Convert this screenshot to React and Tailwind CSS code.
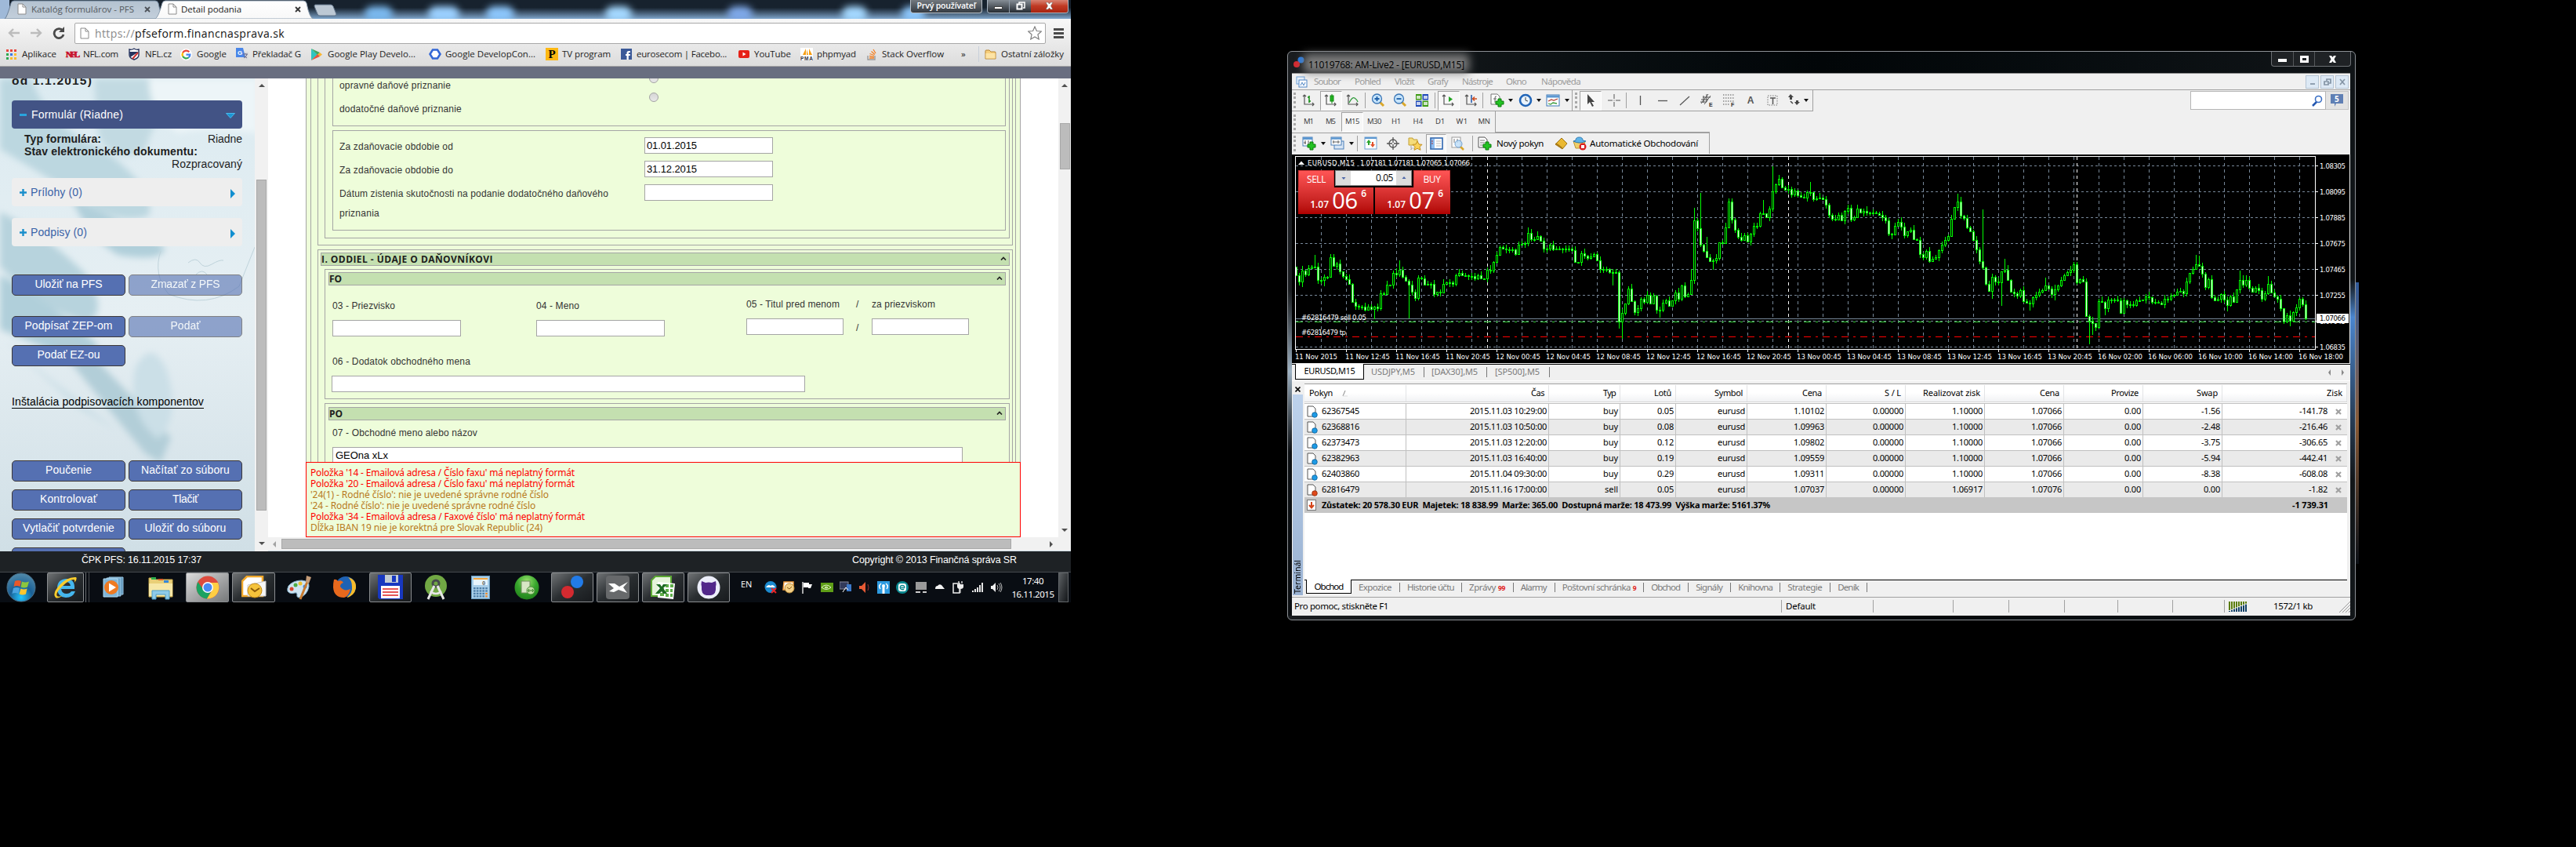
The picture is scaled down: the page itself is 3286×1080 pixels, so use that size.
import React, { useLayoutEffect, useRef } from "react";

/* Text run whose letter spacing is computed so it occupies the given width. */
function Fit({ w, className = "", children }) {
  const ref = useRef(null);
  useLayoutEffect(() => {
    const el = ref.current;
    el.style.letterSpacing = "0px";
    const n = el.textContent.length;
    const nat = el.getBoundingClientRect().width;
    el.style.letterSpacing = (w - nat) / n + "px";
  }, [w, children]);
  return (
    <span className={"shrink-0 whitespace-pre " + className}>
      <span ref={ref}>{children}</span>
    </span>
  );
}

const S = ({ w = 16, h = 16, vb, className = "", children }) => (
  <svg width={w} height={h} viewBox={vb || `0 0 ${w} ${h}`} className={"shrink-0 " + className}>
    {children}
  </svg>
);

/* ---------------- browser ---------------- */

const PageIcon = () => (
  <S w={12} h={15}>
    <path d="M1 1h6l4 4v9H1z" fill="#fff" stroke="#8b8b8b" />
    <path d="M7 1v4h4" fill="none" stroke="#8b8b8b" />
  </S>
);

const bookmarks = [
  { t: "Aplikace", w: 44, ml: "ml-[8px]", g: "gap-[7px]", i: (
    <S w={13} h={13}>{[0, 1, 2].map((r) => [0, 1, 2].map((c) => (
      <rect key={r + "" + c} x={c * 5} y={r * 5} width="3" height="3" fill={["#e8453c", "#e8453c", "#e8453c", "#2da94f", "#3c79e6", "#f9bb2d", "#2da94f", "#f9bb2d", "#f9bb2d"][r * 3 + c]} />
    )))}</S>) },
  { t: "NFL.com", w: 45, ml: "ml-[12px]", g: "gap-[6px]", i: <span className="w-4 whitespace-nowrap font-['Liberation_Serif'] text-[11px] font-bold leading-none tracking-[-2px] text-[#c8102e] [-webkit-text-stroke:0.7px_#c8102e]">NFL</span> },
  { t: "NFL.cz", w: 34, ml: "ml-[13px]", g: "gap-[7px]", i: <S w={14} h={16}><path d="M1 2q3 1 6-1q3 2 6 1v7q0 4-6 6q-6-2-6-6z" fill="#fff" stroke="#26335e" strokeWidth="1.4" /><path d="M1 5h12L2 12z" fill="#26335e" /><path d="M12 6L5 14" stroke="#c33" strokeWidth="2" /></S> },
  { t: "Google", w: 38, ml: "ml-[11px]", g: "gap-[6px]", i: <S w={15} h={15} vb="0 0 16 16"><circle cx="8" cy="8" r="8" fill="#fff" /><g fill="none" strokeWidth="2.4"><path d="M12 4.6A5.2 5.2 0 0 0 3.4 5.6" stroke="#ea4335" /><path d="M3.4 5.6a5.2 5.2 0 0 0 0 4.8" stroke="#fbbc05" /><path d="M3.4 10.4a5.2 5.2 0 0 0 8 1.6" stroke="#34a853" /><path d="M11.4 12A5 5 0 0 0 13.2 8H8" stroke="#4285f4" /></g></S> },
  { t: "Překladač G", w: 62, ml: "ml-[12px]", g: "gap-[5px]", i: <S w={16} h={16}><rect x="6" y="5" width="10" height="11" fill="#dcdcdc" /><path d="M0 0h9l3 12H0z" fill="#4a86e8" /><text x="2" y="9" fontSize="8" fontWeight="bold" fill="#fff" fontFamily="Liberation Sans">G</text><path d="M9 8h6M12 7v1M10 13q4-2 4-5M10 10l4 3" stroke="#668" fill="none" /></S> },
  { t: "Google Play Develo...", w: 112, ml: "ml-[13px]", g: "gap-[7px]", i: <S w={14} h={15}><path d="M0 0l8 7.5L0 15z" fill="#31c4c0" /><path d="M0 0l11 5-3 3z" fill="#41a85f" /><path d="M11 5l3 2.500-3 2.500-3-2.500z" fill="#fbb62d" /><path d="M0 15l11-5-3-3z" fill="#e8533b" /></S> },
  { t: "Google DevelopCon...", w: 115, ml: "ml-[17px]", g: "gap-[5px]", i: <S w={16} h={14}><path d="M5 1.500h6l3.500 5.500-3.500 5.500H5L1.500 7z" fill="#fff" stroke="#3367d6" strokeWidth="2.6" /></S> },
  { t: "TV program", w: 62, ml: "ml-[13px]", g: "gap-[5px]", i: <span className="flex h-[16px] w-[16px] items-center justify-center bg-[#fdb813] font-['Liberation_Serif'] text-[15px] font-bold leading-none text-black">P</span> },
  { t: "eurosecom | Facebo...", w: 115, ml: "ml-[13px]", g: "gap-[6px]", i: <S w={14} h={14}><rect width="14" height="14" fill="#3b5998" /><path d="M7.500 14V9H6V7h1.500V5.500Q7.500 3 10 3h2v2h-1.300q-.9 0-.9 1V7H12l-.3 2H9.800v5z" fill="#fff" /></S> },
  { t: "YouTube", w: 47, ml: "ml-[15px]", g: "gap-[6px]", i: <S w={14} h={10}><rect width="14" height="10" rx="2" fill="#e62117" /><path d="M5.500 2.500l4 2.500-4 2.500z" fill="#fff" /></S> },
  { t: "phpmyad", w: 50, ml: "ml-[12px]", g: "gap-[5px]", i: <S w={16} h={16}><rect width="16" height="16" fill="#fff" /><path d="M3 9l4-8v8zM8 9V2l2 7zM11 9l0-8 4 8z" fill="#f89c0e" /><text x="0" y="16" fontSize="6.500" fontWeight="bold" fill="#334" fontFamily="Liberation Sans" textLength="16">PMA</text></S> },
  { t: "Stack Overflow", w: 79, ml: "ml-[14px]", g: "gap-[7px]", i: <S w={12} h={15}><path d="M1 9v5h9V9" fill="none" stroke="#9a9b9c" strokeWidth="1.400" /><path d="M3 12h6M3 9.500l6 .8M3.500 6.500l5.500 2M5.500 3.500l4.500 4M8 1l3 5" stroke="#f48024" strokeWidth="1.300" /></S> },
];

const Glow = ({ c }) => <div className={"absolute top-[8px] h-[20px] rounded-full blur-[5px] " + c} />;

function TabStrip() {
  return (
    <div className="relative flex h-[24px] overflow-hidden bg-gradient-to-b from-[#17222e] from-40% to-[#7fa6cc] font-['Open_Sans',sans-serif] text-[11.5px]">
      <Glow c="left-[465px] w-[36px] bg-[#7ab8ee]" />
      <Glow c="left-[546px] w-[40px] bg-[#9bd0ff]" />
      <Glow c="left-[620px] w-[36px] bg-[#8cc6fb]" />
      <Glow c="left-[772px] w-[34px] bg-[#a4d8ff]" />
      <Glow c="left-[928px] w-[32px] bg-[#7ea8e8]" />
      <Glow c="left-[1074px] w-[32px] bg-[#a4d8ff]" />
      <Glow c="left-[1150px] w-[30px] bg-[#8cc6fb]" />
      <svg width="440" height="24" className="absolute left-0 top-0">
        <defs>
          <linearGradient id="tabA" x1="0" y1="0" x2="0" y2="1"><stop offset="0" stopColor="#b4c2d0" /><stop offset="1" stopColor="#c3cfdb" /></linearGradient>
          <linearGradient id="tabB" x1="0" y1="0" x2="0" y2="1"><stop offset="0" stopColor="#fff" /><stop offset="1" stopColor="#f8f8f8" /></linearGradient>
        </defs>
        <rect width="12" height="24" fill="#9fb9d8" />
        <path d="M6 24Q9 22 14 4q1-3 4-3H198q3 0 4 3q3 16 8 20z" fill="url(#tabA)" stroke="#6d8299" />
        <path d="M198 24Q202 22 207 4q1-3 4-3H387q3 0 4 3q4 20 9 20z" fill="url(#tabB)" stroke="#8fa0b2" />
        <path d="M402 6h20q2 0 3 2l4 10q0 2-2 2h-19q-2 0-3-2l-4-10q0-2 1-2z" fill="#bcc8d4" stroke="#5f7288" />
      </svg>
      <div className="relative flex h-[24px] w-full items-center pb-px">
        <div className="ml-[22px]"><PageIcon /></div>
        <Fit w={131} className="ml-[6px] text-[#555a60]">Katalóg formulárov - PFS</Fit>
        <S w={8} h={8} className="ml-[13px]"><path d="M1 1l6 6M7 1l-6 6" stroke="#4d5258" strokeWidth="1.800" /></S>
        <div className="ml-[22px]"><PageIcon /></div>
        <Fit w={77} className="ml-[5px] text-[#222]">Detail podania</Fit>
        <S w={8} h={8} className="ml-[68px]"><path d="M1 1l6 6M7 1l-6 6" stroke="#333" strokeWidth="1.800" /></S>
        <div className="flex-1" />
        <div className="-mt-[7px] flex h-[18px] w-[92px] shrink-0 items-center justify-center rounded-b border border-t-0 border-[#b6bec6] bg-gradient-to-b from-[#777d83] to-[#363c43] text-[10.5px] font-semibold text-white"><Fit w={75}>Prvý používateľ</Fit></div>
        <div className="-mt-[7px] ml-[6px] mr-[3px] flex h-[18px] w-[104px] shrink-0 overflow-hidden rounded-b border border-t-0 border-[#a9b5c2]">
          <div className="flex w-[28px] items-center justify-center border-r border-[#8d99a6] bg-gradient-to-b from-[#8c949c] to-[#272d34]"><div className="mt-1 h-[4px] w-[11px] border border-[#444] bg-white" /></div>
          <div className="flex w-[27px] items-center justify-center bg-gradient-to-b from-[#8c949c] to-[#272d34]"><S w={12} h={11}><path d="M4 3V1h7v7H9" fill="none" stroke="#fff" strokeWidth="1.500" /><rect x="1.500" y="3.500" width="6" height="6" fill="none" stroke="#fff" strokeWidth="2" /></S></div>
          <div className="flex w-[47px] items-center justify-center bg-gradient-to-b from-[#d98a7b] via-[#c03a24] to-[#a92410]"><S w={11} h={9}><path d="M1 0h3l1.500 2L7 0h3L7.500 4.500 10 9H7L5.500 7 4 9H1l2.500-4.500z" fill="#fff" stroke="#555" strokeWidth=".5" /></S></div>
        </div>
      </div>
    </div>
  );
}

function BrowserBars() {
  return (
    <div className="h-[61px] bg-gradient-to-b from-[#f8f8f8] to-[#dcdcdc] font-['Open_Sans',sans-serif]">
      <div className="flex h-[33px] items-center pt-[3px]">
        <S w={16} h={14} className="ml-[9px]"><path d="M8 2L3 7l5 5M3 7h13" fill="none" stroke="#bcbcbc" strokeWidth="2.400" /></S>
        <S w={16} h={14} className="ml-[14px]"><path d="M8 2l5 5-5 5M0 7h13" fill="none" stroke="#bcbcbc" strokeWidth="2.400" /></S>
        <S w={16} h={16} className="ml-[12px]"><path d="M13 5A6 6 0 1 0 14 10" fill="none" stroke="#4a4a4a" strokeWidth="2.800" /><path d="M15 0v7H8z" fill="#4a4a4a" /></S>
        <div className="ml-[12px] flex h-[27px] w-[1239px] shrink-0 items-center rounded-[2px] border border-[#a9a9a9] bg-white text-[14px]">
          <div className="ml-[6px]"><PageIcon /></div>
          <Fit w={242} className="ml-[7px] text-[#111]"><span className="text-[#8a8a8a]">https://</span>pfseform.financnasprava.sk</Fit>
          <div className="flex-1" />
          <S w={18} h={18} className="mr-[4px]"><path d="M9 1l2.400 5.500 6 .5-4.500 4 1.300 6L9 14l-5.200 3 1.300-6-4.500-4 6-.5z" fill="#fff" stroke="#808080" strokeWidth="1.200" /></S>
        </div>
        <S w={13} h={13} className="ml-[10px]"><path d="M0 1.500h13M0 6.500h13M0 11.500h13" stroke="#4a4a4a" strokeWidth="3" /></S>
      </div>
      <div className="flex h-[27px] items-center pb-[3px] text-[11.5px] text-[#222]">
        {bookmarks.map((b) => (
          <div key={b.t} className={"flex shrink-0 items-center " + b.g + " " + b.ml}>
            {b.i}
            <Fit w={b.w}>{b.t}</Fit>
          </div>
        ))}
        <span className="ml-[22px] w-[8px]">»</span>
        <div className="flex-1" />
        <div className="h-[20px] w-px bg-[#c8d0da]" />
        <S w={15} h={13} className="ml-[7px]"><path d="M1 2q0-1 1-1h4l2 2h5q1 0 1 1v8H1z" fill="#f7cf7c" stroke="#b98532" /><path d="M1.500 5h12v6.500h-12z" fill="#fde3a5" /></S>
        <Fit w={80} className="ml-[6px] mr-[9px]">Ostatní záložky</Fit>
      </div>
      <div className="h-px bg-[#a5a5a5]" />
    </div>
  );
}

const Btn = ({ w, off, children }) => (
  <div className={"flex h-[27px] w-[145px] items-center justify-center rounded-[5px] border border-[#3d3838] bg-[#5570b2] pb-[3px] text-[14px] text-white " + (off ? "opacity-60" : "")}>
    {children && <Fit w={w}>{children}</Fit>}
  </div>
);

const Row = ({ mt, children }) => <div className={"ml-[15px] flex gap-[4px] " + mt}>{children}</div>;

function Sidebar() {
  return (
    <div className="relative h-[603px] w-[325px] shrink-0 overflow-hidden bg-gradient-to-b from-[#dcebf1] via-[#e6eff3] to-[#d0dfe6] font-['Liberation_Sans',sans-serif] text-[14px] text-[#1e1e1e]">
      <svg width="325" height="603" className="absolute left-0 top-0">
        <defs><filter id="soft"><feGaussianBlur stdDeviation="4" /></filter></defs>
        <g filter="url(#soft)">
          <path d="M0 0h40Q60 60 130 90Q200 140 190 175Q150 190 100 150L0 90z" fill="#bcd7e0" />
          <path d="M120 0h160q-10 10-50 12q-30 30-45 80q-40 20-60-20z" fill="#c2dae2" />
          <path d="M190 0h140v70q-80-10-100 0q-40-20-40-70z" fill="#edf5f8" />
          <path d="M0 170Q60 200 110 250q30 50 0 60Q60 300 0 240z" fill="#b7d3dd" />
          <path d="M90 150Q150 180 210 215q0 20-60 10Q110 200 90 150z" fill="#b0cfda" />
          <path d="M0 250Q70 290 125 340q-10 20-50 10L0 320z" fill="#b0cfda" />
          <path d="M50 310L105 340L218 458L205 490L185 478L80 350z" fill="#b2ced8" />
          <path d="M172 370q20-40 40 0q20 60-10 90q-40-30-30-90z" fill="#cbdfe7" />
          <path d="M0 330L100 420 150 450 60 380z" fill="#c8dde5" />
        </g>
        <path d="M205 220q-10 30 10 55q50 20 90-10l20-50M240 235q10-8 15 0t15 2 15-5M250 250q8-8 14 0" fill="none" stroke="#bfd3db" />
      </svg>
      <div className="relative flex h-full flex-col [&>*]:shrink-0">
        <div className="-mt-[7px] ml-[15px] h-[20px] text-[15.500px] font-bold leading-[20px]"><Fit w={103}>od 1.1.2015)</Fit></div>
        <div className="ml-[15px] mt-[15px] flex h-[36px] w-[294px] items-center rounded-[4px] bg-[#425385] text-white">
          <div className="ml-[10px] h-[3px] w-[9px] bg-[#29a3dd]" />
          <Fit w={117} className="ml-[6px]">Formulár (Riadne)</Fit>
          <S w={12} h={7} className="ml-[131px] mt-[3px]"><path d="M.5.500h11L6 6.500z" fill="#1b95d3" stroke="#4bb8ea" /></S>
        </div>
        <div className="ml-[31px] mt-[5px] flex h-[16px] w-[278px] items-center justify-between"><Fit w={98} className="font-bold">Typ formulára:</Fit><Fit w={44}>Riadne</Fit></div>
        <div className="ml-[31px] flex h-[16px] items-center"><Fit w={221} className="font-bold">Stav elektronického dokumentu:</Fit></div>
        <div className="ml-[31px] flex h-[16px] w-[278px] items-center justify-end"><Fit w={90}>Rozpracovaný</Fit></div>
        {[["Prílohy (0)", 66, "mt-[10px]"], ["Podpisy (0)", 72, "mt-[15px]"]].map(([t, w, m]) => (
          <div key={t} className={"ml-[15px] flex h-[36px] w-[294px] items-center rounded-[4px] bg-[#eeeeee] text-[#3a63a8] " + m}>
            <S w={9} h={9} className="ml-[10px]"><path d="M4.500 0v9M0 4.500h9" stroke="#1b8fcb" strokeWidth="2.400" /></S>
            <Fit w={w} className="ml-[5px]">{t}</Fit>
            <div className="flex-1" />
            <S w={6} h={12} className="mr-[9px] mt-[3px]"><path d="M0 0l6 6-6 6z" fill="#128fd0" /></S>
          </div>
        ))}
        <Row mt="mt-[36px]"><Btn w={86}>Uložiť na PFS</Btn><Btn w={88} off>Zmazať z PFS</Btn></Row>
        <Row mt="mt-[26px]"><Btn w={112}>Podpísať ZEP-om</Btn><Btn w={38} off>Podať</Btn></Row>
        <Row mt="mt-[10px]"><Btn w={80}>Podať EZ-ou</Btn></Row>
        <div className="ml-[15px] mt-[36px] h-[18px] leading-[18px] text-black"><Fit w={245} className="border-b border-black leading-[13px]">Inštalácia podpisovacích komponentov</Fit></div>
        <Row mt="mt-[66px]"><Btn w={59}>Poučenie</Btn><Btn w={113}>Načítať zo súboru</Btn></Row>
        <Row mt="mt-[10px]"><Btn w={73}>Kontrolovať</Btn><Btn w={33}>Tlačiť</Btn></Row>
        <Row mt="mt-[10px]"><Btn w={117}>Vytlačiť potvrdenie</Btn><Btn w={104}>Uložiť do súboru</Btn></Row>
        <Row mt="mt-[10px]"><Btn /></Row>
      </div>
    </div>
  );
}

const Input = ({ c, children }) => <div className={"flex h-[21px] shrink-0 items-center border border-[#a5a5a5] bg-white pl-[2px] text-[13px] text-black " + c}>{children}</div>;
const Radio = ({ c = "" }) => <div className={"h-[12px] w-[12px] rounded-full border border-[#a3a3a3] bg-gradient-to-b from-[#d6d6d6] to-[#e8e8e8] " + c} />;
const Caret = () => <S w={8} h={5} className="mb-[3px] mr-[3px]"><path d="M1 4.500l3-3 3 3" fill="none" stroke="#222" strokeWidth="1.700" /></S>;
const Bar = ({ w, children }) => (
  <div className="flex h-[17px] items-center justify-between border border-[#a5a5a5] bg-[#c4e0b0] font-['Open_Sans',sans-serif] text-[12px] font-bold text-[#1c1c1c]">
    <Fit w={w}>{children}</Fit><Caret />
  </div>
);

function FormPage() {
  return (
    <div className="relative h-[585px] overflow-hidden bg-white font-['Liberation_Sans',sans-serif] text-[12px] text-[#333]">
      <div className="ml-[48px] h-[640px] w-[912px] border-x border-[#a5a5a5] bg-[#eefdda] px-[5px]">
        <div className="h-full border-x border-[#a5a5a5] pl-[8px] pr-[3px]">
          <div className="h-[213px] border border-t-0 border-[#a5a5a5] pl-[8px] pr-[3px]">
            <div className="h-[204px] border border-t-0 border-[#a5a5a5] pl-[9px] pr-[4px]">
              <div className="h-[61px] border border-t-0 border-[#a5a5a5] pl-[8px]">
                <div className="flex h-[30px] pt-[1px]"><Fit w={142} className="leading-[16px]">opravné daňové priznanie</Fit><Radio c="-mt-[7px] ml-[253px]" /></div>
                <div className="flex h-[30px] pt-[1px]"><Fit w={156} className="leading-[16px]">dodatočné daňové priznanie</Fit><Radio c="-mt-[13px] ml-[239px]" /></div>
              </div>
              <div className="mt-[5px] h-[128px] border border-[#a5a5a5] pl-[8px] pt-[8px]">
                <div className="flex h-[30px] items-start"><Fit w={145} className="mt-[4px] leading-[16px]">Za zdaňovacie obdobie od</Fit><Input c="ml-[244px] w-[164px]"><Fit w={64}>01.01.2015</Fit></Input></div>
                <div className="flex h-[30px] items-start"><Fit w={145} className="mt-[4px] leading-[16px]">Za zdaňovacie obdobie do</Fit><Input c="ml-[244px] w-[164px]"><Fit w={64}>31.12.2015</Fit></Input></div>
                <div className="flex h-[25px] items-start"><Fit w={343} className="mt-[4px] leading-[16px]">Dátum zistenia skutočnosti na podanie dodatočného daňového</Fit><Input c="ml-[46px] w-[164px]" /></div>
                <Fit w={51} className="mt-[4px] block leading-[16px]">priznania</Fit>
              </div>
            </div>
          </div>
          <div className="mt-[5px] h-[420px] border border-[#a5a5a5] pl-[3px] pr-[3px] pt-[3px]">
            <Bar w={219}>I. ODDIEL - ÚDAJE O DAŇOVNÍKOVI</Bar>
            <div className="ml-[5px] mt-[4px] h-[166px] border border-[#a5a5a5] pl-[4px] pr-[4px] pt-[3px]">
              <Bar w={16}>FO</Bar>
              <div className="ml-[5px] mt-[15px] flex h-[18px] items-center">
                <Fit w={80} className="mt-[4px] w-[260px]">03 - Priezvisko</Fit>
                <Fit w={55} className="mt-[4px] w-[268px]">04 - Meno</Fit>
                <Fit w={119} className="w-[140px]">05 - Titul pred menom</Fit>
                <span className="w-[20px]">/</span>
                <Fit w={81}>za priezviskom</Fit>
              </div>
              <div className="ml-[5px] mt-[9px] flex h-[23px] items-start">
                <Input c="mt-[2px] w-[164px]" />
                <Input c="ml-[96px] mt-[2px] w-[164px]" />
                <Input c="ml-[104px] w-[124px]" />
                <span className="ml-[16px] mt-[3px] w-[20px]">/</span>
                <Input c="w-[124px]" />
              </div>
              <Fit w={176} className="ml-[5px] mt-[24px] block leading-[16px]">06 - Dodatok obchodného mena</Fit>
              <Input c="ml-[4px] mt-[10px] w-[604px]" />
            </div>
            <div className="ml-[5px] mt-[5px] h-[200px] border border-[#a5a5a5] pl-[4px] pr-[4px] pt-[4px]">
              <Bar w={17}>PO</Bar>
              <Fit w={185} className="ml-[5px] mt-[8px] block leading-[16px]">07 - Obchodné meno alebo názov</Fit>
              <Input c="ml-[5px] mt-[10px] w-[804px]"><Fit w={67} className="ml-px">GEOna xLx</Fit></Input>
            </div>
          </div>
        </div>
      </div>
      <div className="absolute left-[48px] top-[489px] h-[96px] w-[912px] border border-[#f00] bg-[#eefdda] pl-[5px] pt-[6px] font-['Noto_Sans',sans-serif] text-[12px] leading-[14px] text-[#f00]">
        <Fit w={337} className="block">Položka '14 - Emailová adresa / Číslo faxu' má neplatný formát</Fit>
        <Fit w={337} className="block">Položka '20 - Emailová adresa / Číslo faxu' má neplatný formát</Fit>
        <Fit w={304} className="block text-[#b87a1c]">'24(1) - Rodné číslo': nie je uvedené správne rodné číslo</Fit>
        <Fit w={287} className="block text-[#b87a1c]">'24 - Rodné číslo': nie je uvedené správne rodné číslo</Fit>
        <Fit w={350} className="block">Položka '34 - Emailová adresa / Faxové číslo' má neplatný formát</Fit>
        <Fit w={296} className="block text-[#b87a1c]">Dĺžka IBAN 19 nie je korektná pre Slovak Republic (24)</Fit>
      </div>
    </div>
  );
}

const Tri = ({ d, c = "#505050" }) => <S w={8} h={8} className="mx-auto"><path d={d} fill={c} /></S>;

/* ---------------- taskbar ---------------- */

const TB = ({ w, lit, children }) => (
  <div className={"flex h-[38px] shrink-0 items-center justify-center rounded-[2px] border border-[#8a8d90] " + w + " " + (lit ? "bg-gradient-to-br from-[#dcdcdc] to-[#77797b]" : "bg-gradient-to-br from-[#707375] via-[#2a2e31] to-[#181b1e]")}>{children}</div>
);

function Taskbar() {
  return (
    <div className="flex h-[39px] shrink-0 items-center border-t border-[#45494d] bg-[#090d13] text-white">
      <S w={38} h={38} className="ml-[8px]">
        <defs><radialGradient id="orb" cx=".5" cy=".85" r=".8"><stop offset="0" stopColor="#22c7ff" /><stop offset=".5" stopColor="#1a5f95" /><stop offset="1" stopColor="#4c86a8" /></radialGradient></defs>
        <circle cx="19" cy="19" r="18" fill="url(#orb)" stroke="#4b7088" />
        <path d="M11 11q4-2 8 0l-1.500 7q-4-2-8 0z" fill="#e8582a" /><path d="M20 11.500q4 2 9 0l-2 7q-4 2-8.500 0z" fill="#8cc63e" /><path d="M9 20q4-2 8 0l-1.500 7q-4-2-8 0z" fill="#4aa3e0" /><path d="M18.500 20.500q4 2 8 0l-1.500 7q-4 2-8.500 0z" fill="#fdc62f" />
      </S>
      <div className="ml-[14px] flex">
        <TB w="w-[47px]"><S w={32} h={32}><path d="M27 18H10q1 6 7 6q4 0 6-3h5q-3 8-12 8Q5 28 5 17T16 5q12 0 11 13zM10 14h12q-1-5-6-5t-6 5z" fill="#45b7ee" /><path d="M3 29Q-2 24 8 13T29 3q2 2-2 7q1-4-1-4Q20 6 11 15T5 27q2 2 7-1Q6 31 3 29z" fill="#f8cc2c" /></S></TB>
        <div className="h-[38px] w-[3px] border-r border-[#6b6e71]" /><div className="h-[38px] w-[4px] border-r border-[#4b4e51]" />
      </div>
      <S w={28} h={28} className="ml-[17px]"><path d="M8 1h18v22H8z" fill="#5d94ba" stroke="#9cc8e4" /><path d="M5 2h18v23H5z" fill="#6fa6ca" stroke="#9cc8e4" /><path d="M1 3h18v23H1z" fill="#7fb5d8" stroke="#b4dcf2" /><circle cx="11" cy="14" r="9" fill="#ee7a22" /><path d="M8 8.500l9 5.500-9 5.500z" fill="#fff" /></S>
      <S w={32} h={32} className="ml-[30px]"><path d="M1 4h7l2 2h21v22H1z" fill="#e9cf77" stroke="#c9a94d" /><rect x="4" y="3" width="6" height="3" fill="#2fae4b" /><rect x="13" y="5" width="6" height="2" fill="#e05d2a" /><rect x="20" y="7" width="6" height="3" fill="#3488dd" /><path d="M1 11h30v16H1z" fill="#f6e7a6" /><path d="M5 31V20h22v11h-5v-6H10v6z" fill="#8ecbe9" stroke="#4d9cc6" /></S>
      <div className="ml-[16px] flex gap-[4px]">
        <TB w="w-[55px]" lit><S w={30} h={30} vb="0 0 30 30"><circle cx="15" cy="15" r="14.500" fill="#dd4b3e" /><path d="M2.400 8A14.500 14.500 0 0 0 14 29.500L20.500 18 9.500 18z" fill="#1ca261" /><path d="M14 29.500A14.500 14.500 0 0 0 28 9H15l6 9z" fill="#ffce43" /><circle cx="15" cy="15" r="7" fill="#fff" /><circle cx="15" cy="15" r="5.500" fill="#4a8af4" /></S></TB>
        <TB w="w-[55px]"><S w={32} h={30}><path d="M7 1h20v25H1V7z" fill="#fff" stroke="#f0a72a" strokeWidth="2.500" /><path d="M8 12L31 7v19H8z" fill="#f7f7f7" stroke="#c9c9c9" /><circle cx="17" cy="19" r="9" fill="#f5c33b" stroke="#c68b16" /><path d="M12 16l5 4 6-4" fill="none" stroke="#8d5c0a" strokeWidth="2" /></S></TB>
      </div>
      <S w={32} h={32} className="ml-[14px]"><path d="M3 14Q9 7 20 7q10 1 9 8q-2 11-12 14q-4 0-3-4q0-3-3-2q-6 2-9-2q-1-3 1-7z" fill="#cfe4f1" stroke="#7fa9c4" /><circle cx="7" cy="18" r="2.500" fill="#d8452e" /><circle cx="12" cy="13" r="2.500" fill="#4eac44" /><circle cx="18" cy="11" r="2.500" fill="#eac02f" /><circle cx="24" cy="15" r="2.500" fill="#3c86d6" /><path d="M29 4L18 31" stroke="#c97b30" strokeWidth="3" /><path d="M26 1l6 2-3 8-4-2z" fill="#c49c78" /></S>
      <S w={32} h={32} className="ml-[27px]"><circle cx="17" cy="15" r="13" fill="#1f62b4" /><path d="M20 3q11 3 10 14q-2 10-12 12q8-6 7-14Q25 7 20 3z" fill="#f6bb2c" /><path d="M2 6q3-1 5 2q5-2 7 2q-4 1-4 5q5 7 13 3q-2 9-8 11Q2 29 1 16Q1 10 2 6z" fill="#e8691d" /></S>
      <TB w="ml-[15px] w-[54px]"><S w={32} h={32}><path d="M0 0h32v31H2l-2-2z" fill="#1838c0" /><rect x="9" y="0" width="17" height="10" fill="#c3ccd4" /><rect x="18" y="1" width="5" height="8" fill="#1838c0" /><rect x="4" y="14" width="24" height="16" fill="#fff" /><path d="M6 18h20M6 22h20M6 26h20" stroke="#d22" strokeWidth="1.500" /></S></TB>
      <S w={30} h={32} className="ml-[16px]"><circle cx="15" cy="14" r="14" fill="#71a844" /><circle cx="15" cy="11" r="4" fill="none" stroke="#46494b" strokeWidth="3" /><path d="M13 14L5 31M17 14l8 17" stroke="#e6e6e6" strokeWidth="3" /><path d="M8 21q7 6 14 0" fill="none" stroke="#e6e6e6" strokeWidth="2.500" /></S>
      <S w={24} h={30} className="ml-[30px]"><rect x=".5" y=".5" width="23" height="29" fill="#a9cfe9" stroke="#6598bd" /><rect x="3" y="4" width="18" height="8" fill="#e7f4fc" /><rect x="3" y="3" width="18" height="2" fill="#f5a742" /><text x="14" y="11.500" fontSize="7" fill="#222" fontFamily="Liberation Mono">0</text>{[0, 1, 2, 3].map((r) => [0, 1, 2, 3, 4].map((c) => <rect key={r + "-" + c} x={3 + c * 3.800} y={15 + r * 3.400} width="2.600" height="2.200" fill={c === 4 && r > 1 ? "#ef8a28" : "#4f7fa8"} />))}</S>
      <S w={32} h={32} className="ml-[31px]"><defs><radialGradient id="gr" cx=".5" cy=".25" r=".8"><stop offset="0" stopColor="#9be36d" /><stop offset=".5" stopColor="#36a52c" /><stop offset="1" stopColor="#1f7d19" /></radialGradient></defs><circle cx="16" cy="16" r="15.500" fill="url(#gr)" /><rect x="9" y="8" width="11" height="15" fill="#d7e6c5" stroke="#6d8c5a" /><circle cx="21" cy="20" r="5" fill="#bfe0a4" stroke="#4b8f3b" /><path d="M18 20h6M19 18l-1.500 2 1.500 2M23 18l1.500 2-1.500 2" stroke="#2f7a22" fill="none" /></S>
      <div className="ml-[15px] flex gap-[4px]">
        <TB w="w-[54px]"><S w={30} h={30}><circle cx="21" cy="8" r="8" fill="#227be8" /><circle cx="9" cy="21" r="8" fill="#d42a30" /></S></TB>
        <TB w="w-[54px]"><S w={30} h={30}><rect width="30" height="30" rx="4" fill="#67696b" /><path d="M3 10l8 0 6 4 11-6-6 7 5 7-11-4-6 3-6-1 6-4z" fill="#fff" /></S></TB>
        <TB w="w-[54px]"><S w={32} h={30}><path d="M6 1h20v20l-4 5H1V6z" fill="#e5f4da" stroke="#5ba832" strokeWidth="2" /><path d="M9 8l22 2-2 20-20-2z" fill="#fff" /><path d="M12 16h5v4h-5zM19 11h4v4h-4zM25 11h4v4h-4zM19 17h4v4h-4zM25 17h3v4h-3zM12 22h5v4h-5zM19 23h4v4h-4zM25 23h3v4h-3z" fill="#5fae4a" /><path d="M7 11h5l2 3 2-3h5l-5 5 5 7h-5l-2-3-3 3H6l6-7z" fill="#1e6a23" /></S></TB>
        <TB w="w-[54px]"><S w={30} h={30}><circle cx="15" cy="15" r="14.500" fill="#eceefa" /><path d="M6 7l5 2q4-1 8 0l5-2q1 4 0 7q1 10-6 11h-6q-7-1-6-11q-1-3 0-7z" fill="#52288a" /></S></TB>
      </div>
      <Fit w={14} className="-mt-[8px] ml-[14px] font-['Open_Sans',sans-serif] text-[11px]">EN</Fit>
      <div className="ml-[16px] flex items-center">
        <S w={16} h={16}><circle cx="8" cy="7.500" r="7.500" fill="#1c8bd0" /><path d="M2 8q3-5 6-2q3-3 6 2z" fill="#fff" /><path d="M9 9l6 6M15 9l-6 6" stroke="#e22" strokeWidth="2" /></S>
        <S w={16} h={16} className="ml-[7px]"><path d="M2 1h12v10H1z" fill="#fff" stroke="#f09a3a" strokeWidth="1.500" /><circle cx="9" cy="9" r="6" fill="#f3cf86" stroke="#b98a37" /><path d="M6 8l3 2 3-3" fill="none" stroke="#875b14" /></S>
        <S w={16} h={16} className="ml-[8px]"><path d="M2 1v15" stroke="#ddd" strokeWidth="1.500" /><path d="M3 2h7v6H3zM10 4h4l-2 5H9z" fill="#fff" /></S>
        <S w={16} h={12} className="ml-[9px]"><rect width="16" height="12" fill="#5f9e17" /><path d="M1 6q6-6 12 0q-6 5-12 0zM5 6q2-2 4 0q-2 2-4 0z" fill="none" stroke="#dff0c4" /></S>
        <S w={16} h={16} className="ml-[8px]"><rect y="1" width="11" height="9" fill="#333a5a" stroke="#889" /><rect x="9" y="4" width="6" height="9" fill="#3c78c8" /><path d="M4 14l4-6 3 3" stroke="#fff" fill="none" /></S>
        <S w={16} h={16} className="ml-[8px]"><path d="M1 6h3l5-5v14l-5-5H1z" fill="#e65a34" /><path d="M12 4q2 4 0 8" stroke="#933" fill="none" /></S>
        <S w={16} h={16} className="ml-[8px]"><rect width="16" height="16" fill="#2d9ae0" /><path d="M8 7v9" stroke="#fff" strokeWidth="3" /><path d="M4 10q-3-4 1-7M12 10q3-4-1-7" fill="none" stroke="#fff" strokeWidth="1.500" /><circle cx="8" cy="6" r="2" fill="#fff" /></S>
        <S w={16} h={16} className="ml-[8px]"><circle cx="8" cy="8" r="8" fill="#0c8990" /><rect x="3" y="3" width="10" height="10" rx="3" fill="#fff" /><path d="M11 8.500H5.500M11 8.500q0-3-3-3t-2.800 3q.3 3 5 2" fill="none" stroke="#0c8990" strokeWidth="1.300" /></S>
        <S w={16} h={16} className="ml-[8px]"><rect x="1" y="1" width="14" height="10" fill="#9a9a9a" /><path d="M1 14h6M10 14h5" stroke="#ccc" strokeWidth="2" /></S>
        <S w={16} h={16} className="ml-[8px]"><path d="M2 10q0-4 3-4q2-3 5-1l4 5z" fill="#f3f3f3" /></S>
        <S w={16} h={16} className="ml-[8px]"><rect x="1" y="3" width="8" height="12" fill="none" stroke="#eee" strokeWidth="1.500" /><path d="M8 3V0M12 3V0" stroke="#eee" strokeWidth="1.300" /><path d="M6 4h8v3q0 3-4 3t-4-3z" fill="#eee" /><path d="M10 10v5" stroke="#eee" /></S>
        <S w={16} h={16} className="ml-[8px]"><path d="M2 14v-2M5 14v-4M8 14V8M11 14V5M14 14V2" stroke="#e5e5e5" strokeWidth="2" /></S>
        <S w={16} h={16} className="ml-[8px]"><path d="M1 6h2l4-4v12l-4-4H1z" fill="#eee" /><path d="M9 5q2 3 0 6M11 3q4 5 0 10M13 2q4 6 0 12" fill="none" stroke="#bbb" /></S>
      </div>
      <div className="ml-[11px] flex w-[55px] flex-col items-center font-['Noto_Sans',sans-serif] text-[11.500px] leading-[17px]"><Fit w={27}>17:40</Fit><Fit w={54}>16.11.2015</Fit></div>
      <div className="ml-[5px] h-[38px] w-[13px] border border-[#63676a] bg-gradient-to-br from-[#5d6164] to-[#14171a]" />
    </div>
  );
}

function Browser() {
  return (
    <div className="flex h-[768px] w-[1366px] shrink-0 flex-col overflow-hidden">
      <TabStrip />
      <BrowserBars />
      <div className="h-[15px] shrink-0 bg-[#696e80]" />
      <div className="flex h-[603px] shrink-0">
        <Sidebar />
        <div className="flex h-[603px] w-[17px] shrink-0 flex-col items-center bg-[#f1f1f1] pt-[5px]">
          <Tri d="M0 6l4-4 4 4z" />
          <div className="mt-[116px] h-[422px] w-[13px] border border-[#a8a8a8] bg-[#bcbcbc]" />
          <div className="mt-[38px]"><Tri d="M0 2h8l-4 4z" /></div>
        </div>
        <div className="flex flex-1 flex-col">
          <div className="flex">
            <div className="w-[1008px] shrink-0"><FormPage /></div>
            <div className="flex w-[16px] flex-col items-center bg-[#f1f1f1] pt-[5px]">
              <Tri d="M0 6l4-4 4 4z" />
              <div className="mt-[44px] h-[59px] w-[13px] border border-[#a8a8a8] bg-[#bcbcbc]" />
              <div className="mt-[456px]"><Tri d="M0 2h8l-4 4z" /></div>
            </div>
          </div>
          <div className="flex h-[17px] items-center bg-[#f1f1f1]">
            <S w={8} h={8} className="ml-[5px]"><path d="M5 0v8l-4-4z" fill="#a3a3a3" /></S>
            <div className="ml-[4px] h-[13px] w-[931px] border border-[#a8a8a8] bg-[#bcbcbc]" />
            <S w={8} h={8} className="ml-[47px]"><path d="M2 0v8l4-4z" fill="#505050" /></S>
          </div>
          <div className="h-px bg-[#cfdde5]" />
        </div>
      </div>
      <div className="flex h-[26px] shrink-0 items-center justify-between bg-[#1e2225] pb-[4px] pl-[104px] pr-[69px] font-['Liberation_Sans',sans-serif] text-[12.500px] text-white">
        <Fit w={153}>ČPK PFS: 16.11.2015 17:37</Fit>
        <Fit w={210}>Copyright © 2013 Finančná správa SR</Fit>
      </div>
      <Taskbar />
    </div>
  );
}

/* ---------------- trading terminal ---------------- */

/* Closing level of every 15-minute candle, in chart pixels from the top frame. */
const closes = [152,160,146,151,143,141,141,158,158,154,154,129,140,137,147,153,157,163,186,191,192,192,196,192,195,192,194,175,176,164,164,149,151,145,154,159,164,173,181,155,156,164,163,163,176,173,174,163,161,161,163,152,149,152,152,153,153,156,152,156,156,145,146,135,126,116,118,119,119,119,125,113,112,111,98,106,106,102,108,118,118,113,119,118,119,118,119,118,120,135,135,124,127,130,128,125,133,144,145,144,148,148,148,211,200,188,169,185,199,194,182,186,177,188,178,196,196,187,184,191,184,174,182,165,179,176,158,82,92,113,121,129,134,133,130,110,111,91,58,81,94,103,107,101,109,99,89,89,73,73,78,67,45,36,29,40,43,42,49,44,50,52,53,46,46,55,54,53,55,62,75,80,81,75,82,70,66,81,78,67,72,70,72,72,72,73,75,78,82,99,100,89,84,90,101,96,94,106,107,125,129,121,134,131,129,120,113,107,102,80,65,58,76,79,91,96,107,119,134,142,163,172,154,160,161,147,145,158,173,175,178,171,185,187,188,180,177,173,171,165,169,176,170,165,158,152,148,145,138,161,157,160,204,210,213,218,185,186,194,183,183,183,184,200,184,189,189,190,184,184,183,179,180,186,186,187,189,182,182,178,177,173,172,175,160,149,144,138,140,150,167,157,180,184,182,176,183,190,179,186,170,158,164,158,168,173,168,171,182,175,163,174,179,182,194,211,203,210,199,193,182,189,207];
const highs = { 6: 126, 12: 125, 33: 133, 74: 91, 75: 93, 126: 144, 127: 66, 129: 47, 131: 103, 138: 54, 149: 56, 152: 13, 154: 24, 164: 33, 193: 78, 211: 48, 219: 68, 226: 131, 239: 155, 287: 126, 288: 127, 301: 146, 303: 152, 310: 153 };
const lows = { 2: 167, 9: 166, 25: 208, 36: 207, 46: 179, 101: 165, 103: 220, 104: 233, 108: 203, 116: 206, 133: 145, 190: 106, 225: 191, 234: 197, 222: 182, 242: 184, 253: 240, 254: 228, 255: 223, 258: 203, 297: 198, 317: 217 };

const times = ["11 Nov 2015", "11 Nov 12:45", "11 Nov 16:45", "11 Nov 20:45", "12 Nov 00:45", "12 Nov 04:45", "12 Nov 08:45", "12 Nov 12:45", "12 Nov 16:45", "12 Nov 20:45", "13 Nov 00:45", "13 Nov 04:45", "13 Nov 08:45", "13 Nov 12:45", "13 Nov 16:45", "13 Nov 20:45", "16 Nov 02:00", "16 Nov 06:00", "16 Nov 10:00", "16 Nov 14:00", "16 Nov 18:00"];
const prices = ["1.08305", "1.08095", "1.07885", "1.07675", "1.07465", "1.07255", "1.07045", "1.06835"];

function Chart() {
  return (
    <svg width="1349" height="266" className="block bg-black" fontFamily="'DejaVu Sans Condensed','DejaVu Sans',sans-serif" fontSize="9.5" fontStretch="condensed">
      <g stroke="#778899" strokeDasharray="3 3" shapeRendering="crispEdges">
        {Array.from({ length: 40 }, (_, k) => <path key={k} d={`M${37.5 + k * 32} 3V248`} strokeDasharray="4 4" />)}
        {prices.map((p, k) => <path key={p} d={`M5 ${14.500 + k * 33}H1305`} />)}
      </g>
      <g stroke="#fff" strokeDasharray="4 4" shapeRendering="crispEdges"><path d="M249.500 3V248M633.500 3V248M1001.500 3V248" /></g>
      <path d="M5 209.500H1305" stroke="#778899" />
      <path d="M5 213.500H1305" stroke="#32cd32" strokeDasharray="9 6 3 6" />
      <path d="M5 232.500H1305" stroke="#f00" strokeDasharray="9 6 3 6" />
      <g shapeRendering="crispEdges">
        {closes.map((c, i) => {
          const o = i ? closes[i - 1] : 141;
          const x = 5 + i * 4;
          const t = Math.min(o, c) + 2, b = Math.max(o, c, Math.min(o, c) + 1) + 2;
          const hi = highs[i] ? highs[i] + 2 : t - ((i * 7) % 5) - (i % 3);
          const lo = lows[i] ? lows[i] + 2 : b + ((i * 5) % 6);
          return (
            <g key={i}>
              <rect x={x} y={hi} width="1" height={Math.max(1, lo - hi)} fill="#0f0" />
              <rect x={x - 1} y={t} width="3" height={b - t + 1} fill="#0f0" />
              {b - t > 1 && <rect x={x} y={t + 1} width="1" height={b - t - 1} fill={c > o ? "#fff" : "#000"} />}
            </g>
          );
        })}
      </g>
      <path d="M4.500 248.500V2.500H1305.500V248.500z" fill="none" stroke="#fff" shapeRendering="crispEdges" />
      {times.map((t, k) => (
        <g key={t}>
          <path d={`M${5.500 + k * 64} 248v4`} stroke="#fff" />
          <text x={4 + k * 64} y="261" fill="#fff" textLength={k ? 57 : 54}>{t}</text>
        </g>
      ))}
      {prices.map((p, k) => (
        <g key={p}>
          <path d={`M1305 ${14.500 + k * 33}h4`} stroke="#fff" />
          <text x="1311" y={18 + k * 33} fill="#fff" textLength="33">{p}</text>
        </g>
      ))}
      <rect x="1307" y="203" width="41" height="12" fill="#fff" />
      <text x="1311" y="212" fill="#000" textLength="33">1.07066</text>
      <path d="M8 13l4-4.500 4 4.500z" fill="#fff" />
      <g fill="#fff">
        <text x="20" y="14" textLength="60">EURUSD,M15</text>
        <text x="87" y="14" textLength="140">1.07181 1.07181 1.07065 1.07066</text>
        <text x="12" y="211" textLength="83">#62816479 sell 0.05</text>
        <text x="12" y="230" textLength="57">#62816479 tp</text>
      </g>
    </svg>
  );
}

const Quote = ({ big }) => (
  <div className="flex h-[34px] w-[96px] items-start justify-end bg-gradient-to-b from-[#e23a3a] to-[#b00000] pr-[9px] text-white">
    <Fit w={24} className="mt-[14px] text-[12px] font-semibold leading-[16px]">1.07</Fit>
    <Fit w={33} className="ml-[4px] text-[29px] leading-[32px]">{big}</Fit>
    <span className="ml-[4px] mt-[2px] text-[12px] font-semibold leading-[12px]">6</span>
  </div>
);

function OneClick() {
  return (
    <div className="absolute left-[8px] top-[20px] w-[194px] font-['Open_Sans',sans-serif]">
      <div className="flex h-[22px] items-start bg-black">
        <div className="flex h-[22px] w-[46px] items-center justify-center border border-b-0 border-[#c33] bg-gradient-to-b from-[#ff5555] to-[#e23a3a] text-[12px] text-white"><Fit w={24}>SELL</Fit></div>
        <div className="ml-[1px] flex h-[20px] w-[98px] items-stretch border border-[#888] bg-white text-[12px] text-black">
          <div className="flex w-[19px] items-center bg-[#dcdcdc]"><Tri d="M1.500 3h5L4 6z" c="#4b66a8" /></div>
          <div className="flex flex-1 items-center justify-end pr-[4px]"><Fit w={22}>0.05</Fit></div>
          <div className="flex w-[19px] items-center bg-[#dcdcdc]"><Tri d="M1.500 5h5L4 2z" c="#4b66a8" /></div>
        </div>
        <div className="ml-[2px] flex h-[22px] w-[47px] items-center justify-center border border-b-0 border-[#c33] bg-gradient-to-b from-[#ff5555] to-[#e23a3a] text-[12px] text-white"><Fit w={22}>BUY</Fit></div>
      </div>
      <div className="flex gap-[2px] bg-black"><Quote big="06" /><Quote big="07" /></div>
    </div>
  );
}

const axes = <path d="M3 2v12h12M1 4l2-2 2 2M13 12l2 2-2 2" fill="none" stroke="#555" strokeWidth="1.200" />;
const plus = <path d="M10 7h4v3h3v4h-3v3h-4v-3H7v-4h3z" fill="#22c322" stroke="#0a7a0a" />;
const ic = {
  bars: <S w={18} h={18}>{axes}<path d="M9 3v9M9 5H7M9 10h2" stroke="#138c13" strokeWidth="1.500" /></S>,
  candle: <S w={18} h={18}>{axes}<path d="M10 1v12" stroke="#138c13" /><rect x="8" y="3" width="4" height="7" fill="#22b422" stroke="#138c13" /></S>,
  line: <S w={18} h={18}>{axes}<path d="M4 12q4-8 7-6t4 5" fill="none" stroke="#2f9a3a" strokeWidth="1.300" /></S>,
  zin: <S w={18} h={18}><path d="M11 11l5 5" stroke="#d9a72a" strokeWidth="3" /><circle cx="7.500" cy="7" r="6" fill="#c6e4fb" stroke="#3b76b5" strokeWidth="1.300" /><path d="M4.500 7h6M7.500 4v6" stroke="#1d5fa8" strokeWidth="1.800" /></S>,
  zout: <S w={18} h={18}><path d="M11 11l5 5" stroke="#d9a72a" strokeWidth="3" /><circle cx="7.500" cy="7" r="6" fill="#c6e4fb" stroke="#3b76b5" strokeWidth="1.300" /><path d="M4.500 7h6" stroke="#1d5fa8" strokeWidth="1.800" /></S>,
  tiles: <S w={18} h={18}><path d="M1 1h7.500v7.500H1z" fill="#3f9b15" /><path d="M9.500 1H17v7.500H9.500z" fill="#1f49b8" /><path d="M1 9.500h7.500V17H1z" fill="#1f49b8" /><path d="M9.500 9.500H17V17H9.500z" fill="#3f9b15" /><path d="M2 4h5M2 6h5M11 4h5M11 6h5M2 12h5M2 14h5M11 12h5M11 14h5" stroke="#fff" strokeWidth="1.400" /></S>,
  shift: <S w={18} h={18}>{axes}<path d="M9 4l5 3.500-5 3.500z" fill="#22a322" /></S>,
  auto: <S w={18} h={18}>{axes}<path d="M9 2v10" stroke="#1d55a8" strokeWidth="1.500" /><path d="M16 7h-5M13 4.500L10.500 7 13 9.500" fill="none" stroke="#cf4d1f" strokeWidth="1.500" /></S>,
  ind: <S w={18} h={18}><path d="M1 1h8l3 3v10H1z" fill="#fff" stroke="#777" /><path d="M8 4q-2-1-2 2v6M4 7h4" fill="none" stroke="#666" />{plus}</S>,
  clock: <S w={18} h={18}><circle cx="9" cy="9" r="7" fill="#eaf4fd" stroke="#2266b8" strokeWidth="2.600" /><path d="M9 5v4l3 1" fill="none" stroke="#444" /></S>,
  tmpl: <S w={18} h={16}><rect x="1" y="1" width="16" height="14" fill="#fff" stroke="#3b76b5" /><path d="M1 3h16" stroke="#5c97d0" strokeWidth="3" /><path d="M3 9l4-2 3 1 5-2" fill="none" stroke="#b0392d" strokeWidth="1.300" /><path d="M3 12l3 1 3-2 5 1" fill="none" stroke="#3a9a3a" strokeWidth="1.300" /></S>,
  cursor: <S w={12} h={16}><path d="M2 0v13l3-3 3 6 2-1-3-5h4z" fill="#444" /></S>,
  cross: <S w={16} h={16}><path d="M8 0v6M8 10v6M0 8h6M10 8h6M8 7.500v1" stroke="#555" /></S>,
  vl: <S w={16} h={16}><path d="M8.500 2v12" stroke="#555" strokeWidth="1.300" /></S>,
  hl: <S w={16} h={16}><path d="M2 8.500h12" stroke="#555" strokeWidth="1.300" /></S>,
  dl: <S w={16} h={16}><path d="M2 14L14 3" stroke="#555" strokeWidth="1.200" /></S>,
  eq: <S w={18} h={18}><path d="M2 13L11 1M6 14L14 3M2 8l9 0M4 5h10M1 11h8M5 3v9M9 1v10" stroke="#555" /><text x="12" y="17" fontSize="7" fill="#333" fontFamily="Liberation Sans" fontWeight="bold">E</text></S>,
  fib: <S w={18} h={18}><path d="M2 2h14M2 6h14M2 10h14M2 14h9" stroke="#555" strokeDasharray="1.500 1.500" /><text x="12" y="17" fontSize="7" fill="#333" fontFamily="Liberation Sans" fontWeight="bold">F</text></S>,
  txt: <span className="font-['Liberation_Sans'] text-[12px] font-bold text-[#555]">A</span>,
  lbl: <S w={16} h={16}><rect x="2" y="2" width="12" height="12" fill="none" stroke="#777" strokeDasharray="1.500 1.500" /><path d="M5 5h7M8.500 5v8" stroke="#555" strokeWidth="1.500" /></S>,
  shp: <S w={16} h={16}><path d="M4 0l4 4-2 0v3H3V4H1zM12 14l4-4h-2V8h-3v2H9z" fill="#444" /><path d="M4 9l3 3" stroke="#444" strokeWidth="1.500" /></S>,
  newc: <S w={18} h={18}><rect x="1" y="1" width="12" height="11" fill="#fff" stroke="#4a7eb8" /><path d="M1 2.500h12" stroke="#5c97d0" strokeWidth="3" /><path d="M4 5v5M8 5v5M2 8h3" stroke="#555" />{plus}</S>,
  prof: <S w={18} h={18}><rect x="5" y="6" width="12" height="10" fill="#d8e6f5" stroke="#4a7eb8" /><rect x="1" y="1" width="13" height="10" fill="#fff" stroke="#4a7eb8" /><path d="M1 2.500h13" stroke="#5c97d0" strokeWidth="2.500" /><path d="M4 5v4M10 5v4M3 7h9" stroke="#666" /></S>,
  mw: <S w={17} h={18}><rect x="1" y="1" width="15" height="15" fill="#fff" stroke="#6d9fd0" /><path d="M1 2h15" stroke="#5c97d0" strokeWidth="2" /><path d="M6 4l3 4H7v3H5V8H3z" fill="#2ba52b" /><path d="M11 14l3-4h-2V7h-2v3H8z" fill="#e0502a" /></S>,
  dw: <S w={16} h={16}><circle cx="8" cy="8" r="5" fill="none" stroke="#555" strokeWidth="1.300" /><path d="M8 0v7M8 9v7M0 8h7M9 8h7" stroke="#555" strokeWidth="1.300" /></S>,
  nav: <S w={19} h={18}><path d="M1 2h5l1 2h5v7H1z" fill="#f5dc7a" stroke="#c2a038" /><path d="M4 12v5M4 15h4" stroke="#777" strokeDasharray="1 1" /><path d="M12 6l2 4 4 .3-3 3 1 4-4-2-4 2 1-4-3-3 4-.3z" fill="#fbd35a" stroke="#c28f1c" /></S>,
  term: <S w={17} h={16}><rect x="1" y="1" width="15" height="14" fill="#fff" stroke="#2e66b0" strokeWidth="1.600" /><rect x="2" y="2" width="4" height="12" fill="#8fbdf0" /><path d="M8 5h6M8 8h6M8 11h6" stroke="#bbb" /><path d="M2 5h2M2 8h2" stroke="#a33" /></S>,
  tst: <S w={18} h={18}><rect x="1" y="1" width="11" height="13" fill="#fff" stroke="#999" /><path d="M4 3v5M8 3v5" stroke="#777" /><path d="M12 13l4 4" stroke="#d9a72a" strokeWidth="2.500" /><circle cx="9.500" cy="9.500" r="4.500" fill="#bcdcf8cc" stroke="#6d9fd0" /></S>,
  ord: <S w={18} h={18}><path d="M1 1h8l3 3v10H1z" fill="#fff" stroke="#555" /><path d="M3 5h6M3 8h6M3 11h4" stroke="#777" />{plus}</S>,
  book: <S w={18} h={16}><path d="M2 9l8-8 7 7-6 7z" fill="#eab932" stroke="#9c7315" /><path d="M2 9l9 6v-2L3 7z" fill="#a97b18" /></S>,
  rob: <S w={18} h={18}><path d="M1 6q8 4 15 0l-2 9H4z" fill="#f0cf6a" stroke="#bf9833" /><path d="M4 5q0-4 4.500-4T13 5l4 1q-8 4-16 0z" fill="#5fb4e8" stroke="#2f7cb5" /><circle cx="13" cy="13" r="4.500" fill="#d92020" /><rect x="11" y="11" width="4" height="4" fill="#fff" /></S>,
};

const Cell = ({ w = "w-[28px]", on, children }) => (
  <div className={"flex h-[25px] shrink-0 items-center justify-center " + w + " " + (on ? "border border-b-white border-l-[#a0a0a0] border-r-white border-t-[#a0a0a0] bg-[#f7f7f7]" : "")}>{children}</div>
);
const Sep = ({ c = "" }) => <div className={"h-[20px] w-px shrink-0 bg-[#a0a0a0] " + c} />;
const Grip = ({ c = "" }) => <div className={"h-[20px] w-[3px] shrink-0 border-l-[3px] border-dotted border-[#a8a8a8] " + c} />;
const Drop = ({ w }) => <div className={"flex shrink-0 items-center justify-center " + w}><S w={6} h={4}><path d="M0 0h6L3 4z" fill="#111" /></S></div>;

const cols = [
  ["Pokyn", 30, "w-[130px]"], ["Čas", 17, "w-[182px]"], ["Typ", 16, "w-[91px]"], ["Lotů", 22, "w-[71px]"], ["Symbol", 36, "w-[91px]"], ["Cena", 25, "w-[101px]"],
  ["S / L", 21, "w-[101px]"], ["Realizovat zisk", 73, "w-[101px]"], ["Cena", 25, "w-[101px]"], ["Provize", 35, "w-[101px]"], ["Swap", 27, "w-[101px]"], ["Zisk", 20, "w-[159px]"],
];
const cellW = [48, 98, 19, 21, 35, 39, 39, 39, 39, 21, 24, 36];
const orders = [
  ["62367545", "2015.11.03 10:29:00", "buy", "0.05", "eurusd", "1.10102", "0.00000", "1.10000", "1.07066", "0.00", "-1.56", "-141.78"],
  ["62368816", "2015.11.03 10:50:00", "buy", "0.08", "eurusd", "1.09963", "0.00000", "1.10000", "1.07066", "0.00", "-2.48", "-216.46"],
  ["62373473", "2015.11.03 12:20:00", "buy", "0.12", "eurusd", "1.09802", "0.00000", "1.10000", "1.07066", "0.00", "-3.75", "-306.65"],
  ["62382963", "2015.11.03 16:40:00", "buy", "0.19", "eurusd", "1.09559", "0.00000", "1.10000", "1.07066", "0.00", "-5.94", "-442.41"],
  ["62403860", "2015.11.04 09:30:00", "buy", "0.29", "eurusd", "1.09311", "0.00000", "1.10000", "1.07066", "0.00", "-8.38", "-608.08"],
  ["62816479", "2015.11.16 17:00:00", "sell", "0.05", "eurusd", "1.07037", "0.00000", "1.06917", "1.07076", "0.00", "0.00", "-1.82"],
];

function Orders() {
  return (
    <div className="h-[250px] w-[1330px] border-t border-[#a0a0a0] bg-white font-['Noto_Sans',sans-serif] text-[11px] text-black">
      <div className="flex h-[23px] border-b border-[#d5d5d5] bg-gradient-to-b from-white from-50% to-[#f1f2f4] pt-px">
        {cols.map(([t, w, c], k) => (
          <div key={k} className={"flex items-center border-r border-[#e3e4e6] " + c + (k ? " justify-end pr-[5px]" : " pl-[6px]")}>
            <Fit w={w}>{t}</Fit>
            {k === 0 && <S w={8} h={9} className="ml-[12px]"><path d="M1 8l3-7" stroke="#888" /><path d="M1 8h6" stroke="#ddd" /></S>}
          </div>
        ))}
      </div>
      <div className="h-px" />
      {orders.map((o, r) => (
        <div key={r} className={"flex h-[20px] border-t border-[#c0c0c0] " + (r % 2 ? "bg-[#eaeaea]" : "bg-white")}>
          {o.map((v, k) => (
            <div key={k} className={"flex items-center " + cols[k][2] + (k ? " justify-end" : " pl-[3px]") + (k === 11 ? " pr-[7px]" : " border-r border-[#c0c0c0] pr-[2px]")}>
              {k === 0 && <S w={15} h={16} className="mr-[4px]"><path d="M1 1h7l3 3v10H1z" fill="#fff" stroke="#555" /><circle cx="10" cy="12" r="3.300" fill={r === 5 ? "#e0491a" : "#1e9be6"} stroke={r === 5 ? "#8c2a0a" : "#0b5c92"} strokeWidth=".8" /></S>}
              <Fit w={k === 11 && r === 5 ? 24 : k === 2 && r === 5 ? 17 : k === 10 && r === 5 ? 21 : cellW[k]}>{v}</Fit>
              {k === 11 && <S w={8} h={8} className="ml-[10px]"><path d="M1 1l6 6M7 1l-6 6" stroke="#a0a0a0" strokeWidth="2.200" /></S>}
            </div>
          ))}
        </div>
      ))}
      <div className="flex h-[20px] items-center bg-[#c6c6c6] pl-[3px] font-bold">
        <S w={12} h={14} className="mr-[7px]"><rect x=".5" y=".5" width="11" height="13" fill="#fff" stroke="#777" /><path d="M6 3v7M3 7l3 3.500L9 7" fill="none" stroke="#d5451a" strokeWidth="2" /></S>
        <Fit w={572}>Zůstatek: 20 578.30 EUR  Majetek: 18 838.99  Marže: 365.00  Dostupná marže: 18 473.99  Výška marže: 5161.37%</Fit>
        <div className="flex-1" />
        <Fit w={46} className="mr-[24px]">-1 739.31</Fit>
      </div>
    </div>
  );
}

const bottomTabs = [["Expozice", 42], ["Historie účtu", 60], ["Zprávy", 34, "99"], ["Alarmy", 33], ["Poštovní schránka", 87, "9"], ["Obchod", 37], ["Signály", 34], ["Knihovna", 44], ["Strategie", 44], ["Deník", 27]];

const Win = ({ w, children }) => <div className={"flex h-full items-center justify-center border-l border-[#55585b] first:border-l-0 " + w}>{children}</div>;

function Terminal() {
  return (
    <div className="absolute left-[1642px] top-[65px] flex h-[726px] w-[1363px] flex-col rounded-[6px] border border-[#8d9196] bg-gradient-to-r from-[#1a1d20] via-[#020608] to-[#101417] to-98%">
      <div className="flex h-[27px] shrink-0 items-start">
        <S w={14} h={14} className="ml-[7px] mt-[6px]"><circle cx="9.500" cy="4.500" r="4" fill="#227be8" /><circle cx="4" cy="10" r="4" fill="#d42a30" /></S>
        <div className="relative ml-[5px] mt-[3px]">
          <div className="absolute -inset-x-[6px] inset-y-0 rounded bg-[#7d7d7d] blur-[6px]" />
          <Fit w={199} className="relative font-['Open_Sans',sans-serif] text-[12px] leading-[19px] text-black">11019768: AM-Live2 - [EURUSD,M15]</Fit>
        </div>
        <div className="flex-1" />
        <div className="mr-[5px] flex h-[19px] rounded-b border border-t-0 border-[#6d7074] bg-[#1f2225]">
          <Win w="w-[27px]"><div className="mt-[3px] h-[4px] w-[11px] bg-white" /></Win>
          <Win w="w-[27px]"><div className="h-[9px] w-[11px] border-[3px] border-white" /></Win>
          <Win w="w-[46px]"><S w={11} h={9}><path d="M1 0h3l1.500 2L7 0h3L7.500 4.500 10 9H7L5.500 7 4 9H1l2.500-4.500z" fill="#fff" /></S></Win>
        </div>
      </div>
      <div className="flex h-[692px]">
        <div className="h-full w-[5px] bg-gradient-to-b from-[#1a1d20] from-40% via-[#9fb3c4] via-55% to-[#0c0f12] to-70%" />
        <div className="flex h-full w-[1350px] flex-col bg-[#f0f0f0] font-['Noto_Sans',sans-serif] text-[11px]">
          <div className="flex h-[22px] shrink-0 items-center border-b border-t border-b-[#a0a0a0] border-t-[#888] text-[11.5px] text-[#9b9b9b]">
            <S w={15} h={15} className="ml-[5px] mr-[8px]"><rect x="1" y="1" width="10" height="9" fill="#e9f2fb" stroke="#6d9fd8" /><rect x="4" y="5" width="10" height="9" fill="#fff" stroke="#4f86c6" /><path d="M6 12l2-4 2 4 2-4" fill="none" stroke="#4f86c6" /></S>
            <Fit w={34} className="w-[52px]">Soubor</Fit><Fit w={33} className="w-[51px]">Pohled</Fit><Fit w={25} className="w-[42px]">Vložit</Fit><Fit w={26} className="w-[44px]">Grafy</Fit><Fit w={39} className="w-[56px]">Nástroje</Fit><Fit w={26} className="w-[45px]">Okno</Fit><Fit w={50}>Nápověda</Fit>
            <div className="flex-1" />
            {["M3 8h6", "M2 5h5v4H2zM5 4V2h5v5H8", "M3 2l6 7M9 2l-6 7"].map((d) => (
              <div key={d} className="mr-[2px] flex h-[17px] w-[17px] items-center justify-center border border-[#b4c4d4] bg-[#dde9f5]"><S w={12} h={11}><path d={d} fill="none" stroke="#8494a4" strokeWidth="1.700" /></S></div>
            ))}
          </div>
          <div className="flex h-[27px] shrink-0">
            <div className="flex h-[27px] w-[665px] items-center border-b border-r border-[#a0a0a0]">
              <Grip c="ml-[2px] mr-[3px]" />
              <Cell>{ic.bars}</Cell><Cell on>{ic.candle}</Cell><Cell>{ic.line}</Cell><Sep c="mx-px" />
              <Cell w="w-[29px]">{ic.zin}</Cell><Cell>{ic.zout}</Cell><Cell>{ic.tiles}</Cell><Sep c="ml-[2px] mr-[3px]" />
              <Cell on>{ic.shift}</Cell><Cell w="w-[29px]">{ic.auto}</Cell><Sep c="mr-[4px]" />
              <Cell w="w-[27px]">{ic.ind}</Cell><Drop w="w-[8px]" /><Cell w="w-[29px]">{ic.clock}</Cell><Drop w="w-[6px]" /><Cell w="w-[30px]">{ic.tmpl}</Cell><Drop w="w-[6px]" />
              <Sep c="ml-[3px] !h-[27px]" /><Grip c="ml-[3px] mr-[3px]" />
              <Cell on>{ic.cursor}</Cell><Cell w="w-[31px]">{ic.cross}</Cell><Sep c="mr-[2px]" />
              <Cell w="w-[30px]">{ic.vl}</Cell><Cell>{ic.hl}</Cell><Cell>{ic.dl}</Cell><Cell>{ic.eq}</Cell><Cell>{ic.fib}</Cell><Cell>{ic.txt}</Cell><Cell>{ic.lbl}</Cell><Cell w="w-[26px]">{ic.shp}</Cell><Drop w="w-[6px]" />
            </div>
            <div className="flex-1" />
            <div className="mt-[1px] flex h-[24px] w-[173px] items-center justify-end border border-[#b5b5b5] bg-white pr-[3px]"><S w={15} h={15}><circle cx="9.500" cy="5.500" r="4" fill="#fff" stroke="#3a6fc4" strokeWidth="1.600" /><path d="M7 9l-5 5" stroke="#2457b0" strokeWidth="2.500" /></S></div>
            <div className="mr-[2px] mt-[1px] flex h-[24px] w-[29px] items-center justify-center border border-l-0 border-[#c5c5c5] bg-[#e3e3e3]">
              <S w={16} h={16}><path d="M0 0h16v12H7l-2 4v-4H0z" fill="#5f7fb4" /><text x="5" y="10" fontSize="10" fontWeight="bold" fill="#fff" fontFamily="Noto Sans">5</text></S>
            </div>
          </div>
          <div className="flex h-[27px] shrink-0 text-[#444]">
            <div className="flex h-[27px] w-[260px] items-center border-r border-[#a0a0a0]">
              <Grip c="ml-[2px] mr-[2px]" />
              {[["M1", 12], ["M5", 12], ["M15", 18], ["M30", 18], ["H1", 12], ["H4", 13], ["D1", 12], ["W1", 15], ["MN", 15]].map(([t, w]) => (
                <Cell key={t} w="w-[28px]" on={t === "M15"}><Fit w={w} className="text-[9.5px]">{t}</Fit></Cell>
              ))}
            </div>
            <div className="mt-[26px] h-px w-[273px] bg-[#a0a0a0]" />
          </div>
          <div className="flex h-[28px] shrink-0 items-start text-[11.5px] text-black">
            <div className="flex h-[27px] w-[533px] items-center border-r border-t border-[#a0a0a0]">
              <Grip c="ml-[2px] mr-[3px]" />
              <Cell w="w-[28px]">{ic.newc}</Cell><Drop w="w-[8px]" /><Cell w="w-[28px]">{ic.prof}</Cell><Drop w="w-[8px]" /><Sep c="ml-[3px] mr-[2px]" />
              <Cell>{ic.mw}</Cell><Cell w="w-[29px]">{ic.dw}</Cell><Cell>{ic.nav}</Cell><Cell on w="w-[26px]">{ic.term}</Cell><Cell w="w-[30px]">{ic.tst}</Cell><Sep c="ml-[3px]" />
              <Cell w="w-[30px]">{ic.ord}</Cell><Fit w={60}>Nový pokyn</Fit><Cell w="w-[44px]">{ic.book}</Cell><Cell w="w-[3px]">{ic.rob}</Cell><Fit w={138} className="ml-[12px]">Automatické Obchodování</Fit>
            </div>
          </div>
          <div className="relative h-[266px] w-[1349px] shrink-0"><Chart /><OneClick /></div>
          <div className="h-[1px] shrink-0" />
          <div className="flex h-[20px] shrink-0 items-stretch text-[11px] text-[#7b7b7b]">
            <div className="w-[4px] border-t border-black" />
            <div className="flex w-[88px] items-center justify-center border border-t-0 border-black bg-white text-black"><Fit w={65}>EURUSD,M15</Fit></div>
            <div className="flex flex-1 items-center border-t border-black">
              {[["USDJPY,M5", 56, "pl-[9px] w-[77px]"], ["[DAX30],M5", 59, "pl-[9px] w-[80px]"], ["[SP500],M5", 57, "pl-[10px] w-[80px]"]].map(([t, w, c]) => (
                <div key={t} className={"flex h-[13px] items-center border-r border-[#777] " + c}><Fit w={w}>{t}</Fit></div>
              ))}
              <div className="flex-1" />
              <S w={24} h={8} className="mr-[6px]"><path d="M5 0v8L2 4zM19 0v8l3-4z" fill="#888" /></S>
            </div>
          </div>
          <div className="mt-px h-px shrink-0 bg-white" />
          <div className="mt-[3px] flex h-[272px] shrink-0">
            <div className="ml-px flex w-[14px] flex-col">
              <div className="flex h-[14px] items-center pl-[3px]"><S w={7} h={7}><path d="M.5.500l6 6M6.500.500l-6 6" stroke="#111" strokeWidth="1.700" /></S></div>
              <div className="flex h-[256px] w-[13px] items-end justify-center bg-gradient-to-b from-[#bdd2ec] to-[#9ab2d2] text-black">
                <span className="mb-[2px] rotate-180 text-[10.5px] leading-[13px] [writing-mode:vertical-rl]">Terminál</span>
              </div>
            </div>
            <div className="ml-px w-[1330px]">
              <Orders />
              <div className="flex h-[18px] items-stretch text-[11.5px] text-[#7b7b7b]">
                <div className="w-[2px] border-t border-black" />
                <div className="flex w-[58px] items-center justify-center border border-t-0 border-black bg-white text-black"><Fit w={37}>Obchod</Fit></div>
                <div className="flex flex-1 items-center border-t border-black">
                  {bottomTabs.map(([t, w, n], k) => (
                    <div key={k} className={"flex h-[12px] items-center border-r border-[#777] pl-[9px] " + (k % 3 === 1 ? "pr-[9px]" : "pr-[10px]")}>
                      <Fit w={w}>{t}</Fit>
                      {n && <span className="ml-[3px] mt-[4px] text-[8.5px] font-bold leading-none tracking-[-0.5px] text-[#e02020]">{n}</span>}
                    </div>
                  ))}
                </div>
              </div>
            </div>
          </div>
          <div className="flex h-[22px] shrink-0 items-center border-t border-[#a0a0a0] pt-px text-[11.5px] text-black">
            <Fit w={120} className="ml-[3px]">Pro pomoc, stiskněte F1</Fit>
            <div className="ml-[501px] flex h-[16px] w-[117px] items-center border-l border-[#a0a0a0] pl-[5px]"><Fit w={38}>Default</Fit></div>
            {["w-[102px]", "w-[71px]", "w-[71px]", "w-[68px]", "w-[70px]", "w-[66px]"].map((w, k) => <div key={k} className={"h-[16px] border-l border-[#a0a0a0] " + w} />)}
            <div className="flex h-[16px] flex-1 items-center border-l border-[#a0a0a0] pl-[5px]">
              <S w={24} h={13}>{[0, 1, 2, 3, 4, 5, 6, 7].map((k) => <g key={k}><rect x={k * 3} y="0" width="2" height={11 - k * 1.200} fill="#5a7d0a" /><rect x={k * 3} y={12 - k * 1.200} width="2" height={1 + k * 1.200} fill="#0f3f66" /></g>)}</S>
              <Fit w={50} className="ml-[33px]">1572/1 kb</Fit>
              <div className="flex-1" />
              <S w={16} h={16}><path d="M2 16L16 2M6 16L16 6M10 16l6-6M14 16l2-2" stroke="#999" /></S>
            </div>
          </div>
        </div>
        <div className="h-full flex-1 bg-gradient-to-b from-[#101417] from-38% via-[#4a86d0] via-45% to-[#121619] to-75%" />
      </div>
    </div>
  );
}

export default function App() {
  return (
    <div className="relative flex h-[1080px] w-[3286px] items-start overflow-hidden bg-black">
      <Browser />
      <Terminal />
      <div className="absolute left-[3005px] top-[360px] h-[359px] w-[4px] bg-gradient-to-b from-[#2f5a9c] via-[#8a5a34] to-[#0c1016]" />
    </div>
  );
}
